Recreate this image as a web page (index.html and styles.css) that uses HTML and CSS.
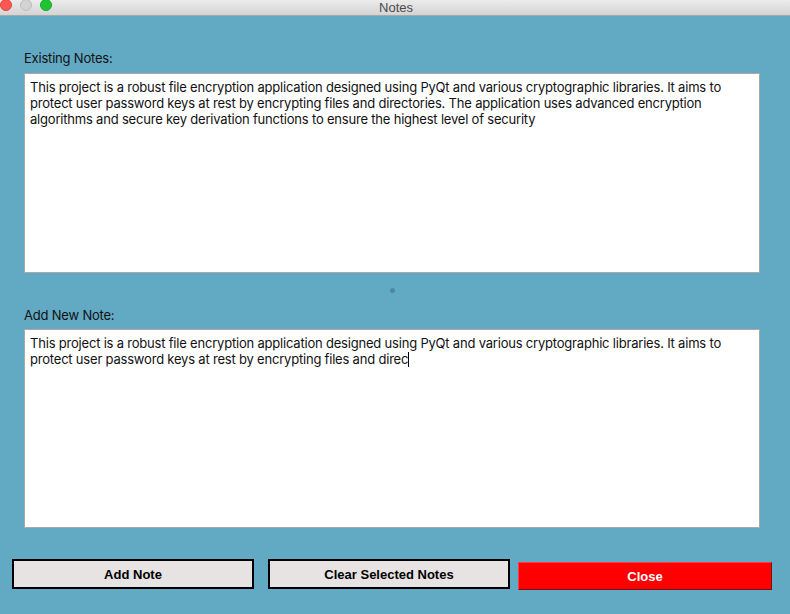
FILE: index.html
```html
<!DOCTYPE html>
<html>
<head>
<meta charset="utf-8">
<title>Notes</title>
<link rel="stylesheet" href="styles.css">
</head>
<body>
<div class="window">
  <div class="titlebar">
    <div class="lights">
      <span class="light red"></span>
      <span class="light gray"></span>
      <span class="light green"></span>
    </div>
    <div class="title">Notes</div>
  </div>
  <div class="content">
    <div class="label first">Existing Notes:</div>
    <div class="note-box">This project is a robust file encryption application designed using PyQt and various cryptographic libraries. It aims to protect user password keys at rest by encrypting files and directories. The application uses advanced encryption algorithms and secure key derivation functions to ensure the highest level of security</div>
    <div class="splitter"><span class="handle"></span></div>
    <div class="label second">Add New Note:</div>
    <div class="note-box second-box">This project is a robust file encryption application designed using PyQt and various cryptographic libraries. It aims to protect user password keys at rest by encrypting files and direc<span class="caret"></span></div>
  </div>
  <div class="buttons">
    <button class="btn btn-add">Add Note</button>
    <button class="btn btn-clear">Clear Selected Notes</button>
    <button class="btn btn-close">Close</button>
  </div>
</div>
</body>
</html>
```
FILE: styles.css
```css
html, body {
  margin: 0;
  padding: 0;
}
body {
  width: 790px;
  height: 614px;
  overflow: hidden;
  background: #62aac4;
  font-family: Inter, "Liberation Sans", Arial, sans-serif;
  font-size: 13px;
  letter-spacing: -0.2px;
  color: #111;
}
.window {
  width: 790px;
  height: 614px;
  display: flex;
  flex-direction: column;
}
.titlebar {
  position: relative;
  height: 15px;
  border-bottom: 1px solid #a8a8a8;
  background: linear-gradient(#ebebeb, #d4d4d4);
  display: flex;
  align-items: center;
  justify-content: center;
}
.lights {
  position: absolute;
  left: 0;
  top: -1px;
  display: flex;
  gap: 8px;
}
.light {
  width: 12px;
  height: 12px;
  border-radius: 50%;
  box-sizing: border-box;
}
.light.red { background: #fc5753; border: 1px solid #e0443e; }
.light.gray { background: #d3d3d3; border: 1px solid #bdbdbd; }
.light.green { background: #1fc434; border: 1px solid #16a629; }
.title {
  font-family: "Liberation Sans", Arial, sans-serif;
  font-size: 13px;
  letter-spacing: 0;
  line-height: 15px;
  color: #4a4a4a;
  margin-left: 2px;
}
.content {
  padding: 34px 30px 0 24px;
  display: flex;
  flex-direction: column;
}
.label {
  line-height: 16px;
  height: 16px;
}
.label.first { margin-bottom: 7px; }
.label.second { margin-bottom: 6px; }
.note-box {
  background: #fff;
  border: 1px solid #a9a9a9;
  height: 200px;
  box-sizing: border-box;
  padding: 5px 5px;
  line-height: 16px;
  color: #111;
}
.second-box { height: 199px; }
.caret {
  display: inline-block;
  width: 1px;
  height: 15px;
  background: #000;
  vertical-align: -3px;
}
.splitter {
  height: 34px;
  display: flex;
  align-items: center;
  justify-content: center;
}
.handle {
  width: 5px;
  height: 5px;
  border-radius: 50%;
  background: #4c88a1;
}
.buttons {
  display: flex;
  align-items: flex-start;
  padding: 31px 0 0 12px;
}
.btn {
  font-family: "Liberation Sans", Arial, sans-serif;
  font-weight: bold;
  font-size: 13px;
  letter-spacing: 0;
  padding: 0;
  margin: 0;
  cursor: pointer;
  box-sizing: border-box;
}
.btn-add, .btn-clear {
  width: 242px;
  height: 30px;
  background: #e6e3e2;
  border: 2px solid #000;
  color: #000;
}
.btn-add { margin-right: 14px; }
.btn-clear { margin-right: 8px; }
.btn-close {
  width: 254px;
  height: 28px;
  margin-top: 3px;
  background: #ff0000;
  color: #fff;
  border: 1px solid #ff3b3b;
  border-right-color: #7a1010;
  border-bottom-color: #7a1010;
}
```
